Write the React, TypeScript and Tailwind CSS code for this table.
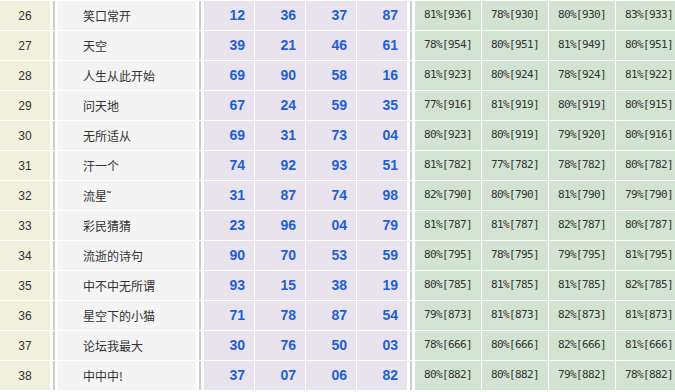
const rows: [string, string, string[], string[]][] = [
  ["26", "笑口常开", ["12", "36", "37", "87"], ["81%[936]", "78%[930]", "80%[930]", "83%[933]"]],
  ["27", "天空", ["39", "21", "46", "61"], ["78%[954]", "80%[951]", "81%[949]", "80%[951]"]],
  ["28", "人生从此开始", ["69", "90", "58", "16"], ["81%[923]", "80%[924]", "78%[924]", "81%[922]"]],
  ["29", "问天地", ["67", "24", "59", "35"], ["77%[916]", "81%[919]", "80%[919]", "80%[915]"]],
  ["30", "无所适从", ["69", "31", "73", "04"], ["80%[923]", "80%[919]", "79%[920]", "80%[916]"]],
  ["31", "汗一个", ["74", "92", "93", "51"], ["81%[782]", "77%[782]", "78%[782]", "80%[782]"]],
  ["32", "流星˜", ["31", "87", "74", "98"], ["82%[790]", "80%[790]", "81%[790]", "79%[790]"]],
  ["33", "彩民猜猜", ["23", "96", "04", "79"], ["81%[787]", "81%[787]", "82%[787]", "80%[787]"]],
  ["34", "流逝的诗句", ["90", "70", "53", "59"], ["80%[795]", "78%[795]", "79%[795]", "81%[795]"]],
  ["35", "中不中无所谓", ["93", "15", "38", "19"], ["80%[785]", "81%[785]", "81%[785]", "82%[785]"]],
  ["36", "星空下的小猫", ["71", "78", "87", "54"], ["79%[873]", "81%[873]", "82%[873]", "81%[873]"]],
  ["37", "论坛我最大", ["30", "76", "50", "03"], ["78%[666]", "80%[666]", "82%[666]", "81%[666]"]],
  ["38", "中中中!", ["37", "07", "06", "82"], ["80%[882]", "80%[882]", "79%[882]", "78%[882]"]],
];

// gray divider column between groups
const Divider = () => <div className="w-[2px] shrink-0 bg-[#cccccc]" />;

export default function App() {
  return (
    <div className="w-[675px] h-[392px] overflow-hidden bg-white pt-px">
      <div className="flex flex-col gap-px">
        {rows.map(([no, name, nums, rates]) => (
          <div key={no} className="flex h-[29px] gap-px text-[#333333]">
            <div className="w-[50px] shrink-0 bg-[#f0f0dc] flex items-center justify-center text-[12px] font-['Liberation_Sans',sans-serif]">
              {no}
            </div>
            <div className="w-px shrink-0" />
            <Divider />
            <div className="w-px shrink-0" />
            <div className="w-[138px] shrink-0 bg-[#f4f4f4] flex items-center pl-[25px] text-[12px] font-['Noto_Sans_CJK_SC',sans-serif]">
              {name}
            </div>
            <div className="w-px shrink-0" />
            <Divider />
            <div className="w-px shrink-0" />
            {nums.map((n, i) => (
              <div
                key={i}
                className="w-[50px] shrink-0 bg-[#e9e3ee] flex items-center justify-end pr-[9px] text-[14px] font-bold text-[#1f5fd6] font-['Liberation_Sans',sans-serif]"
              >
                {n}
              </div>
            ))}
            <div className="w-px shrink-0" />
            <Divider />
            <div className="w-px shrink-0" />
            {rates.map((r, i) => (
              <div
                key={i}
                className="w-[66px] shrink-0 bg-[#d2e3d2] flex items-center justify-center text-[11px] tracking-[-0.6px] font-['DejaVu_Sans_Mono',monospace]"
              >
                {r}
              </div>
            ))}
            <div className="w-px shrink-0" />
            <div className="w-[4px] shrink-0 bg-[#cccccc]" />
          </div>
        ))}
      </div>
    </div>
  );
}
